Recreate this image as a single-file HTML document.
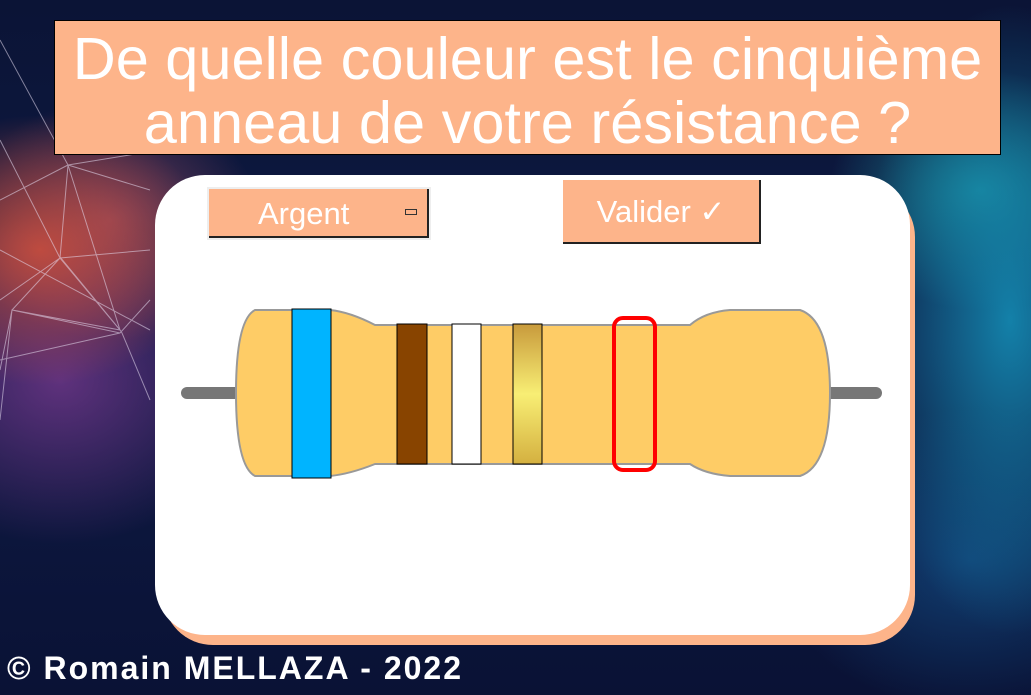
<!DOCTYPE html>
<html><head><meta charset="utf-8"><style>
html,body{margin:0;padding:0}
body{width:1031px;height:695px;overflow:hidden;position:relative;font-family:"Liberation Sans",sans-serif;
background:
radial-gradient(ellipse 230px 180px at 40px 250px, rgba(210,80,60,0.85), transparent 75%),
radial-gradient(ellipse 200px 160px at 110px 220px, rgba(190,90,110,0.6), transparent 75%),
radial-gradient(ellipse 260px 220px at 60px 380px, rgba(130,60,150,0.7), transparent 75%),
radial-gradient(ellipse 200px 420px at 1010px 320px, rgba(20,140,180,0.9), transparent 75%),
radial-gradient(ellipse 200px 160px at 980px 190px, rgba(30,170,180,0.7), transparent 75%),
radial-gradient(ellipse 260px 200px at 970px 560px, rgba(20,90,150,0.6), transparent 75%),
linear-gradient(180deg,#0b1436 0%,#0e1a44 50%,#0a1235 100%);}
.title{position:absolute;left:54px;top:20px;width:947px;height:135px;background:#FDB48A;border:1px solid #000;color:#fff;text-align:center;font-size:59.5px;line-height:64px;padding-top:6px;box-sizing:border-box;white-space:nowrap}
.shadow{position:absolute;left:163px;top:187px;width:752px;height:458px;background:#FDB48A;border-radius:50px}
.panel{position:absolute;left:155px;top:175px;width:755px;height:460px;background:#fff;border-radius:50px}
.dd{position:absolute;left:209px;top:189px;width:220px;height:49px;background:#FDB48A;border-right:2px solid #222;border-bottom:2px solid #222;box-sizing:border-box;color:#fff;font-size:31px;line-height:50px;outline:2px solid #eee}
.dd span{position:absolute;left:49px}
.dd i{position:absolute;left:196px;top:20px;width:10px;height:4px;background:#FDB48A;border:1px solid #333}
.val{position:absolute;left:563px;top:180px;width:198px;height:64px;background:#FDB48A;border-right:2px solid #222;border-bottom:2px solid #222;box-sizing:border-box;color:#fff;font-size:31px;line-height:64px;text-align:center}
.foot{position:absolute;left:7px;top:650px;color:#fff;font-weight:bold;font-size:32px;font-family:"Liberation Sans",sans-serif;letter-spacing:2px}
</style></head><body>
<svg style="position:absolute;left:0;top:0" width="200" height="695" stroke="rgba(230,220,240,0.55)" stroke-width="1" fill="none">
<path d="M0 40 L68 165 L60 258 L12 310 M68 165 L0 200 M68 165 L160 150 M68 165 L120 330 L60 258 M60 258 L0 300 M60 258 L150 250 M120 330 L12 310 L0 370 M120 330 L60 257 M12 310 L120 333 L150 300 M120 330 L122 333 L150 400 M0 250 L150 330 M12 310 L0 420 M120 333 L0 360 M0 140 L60 258 M150 190 L68 165"/>
</svg>
<div class="title">De quelle couleur est le cinquième<br>anneau de votre résistance ?</div>
<div class="shadow"></div>
<div class="panel"></div>
<div class="dd"><span>Argent</span><i></i></div>
<div class="val">Valider ✓</div>
<svg style="position:absolute;left:0;top:0" width="1031" height="695">
<defs><linearGradient id="g" x1="0" y1="0" x2="0" y2="1"><stop offset="0" stop-color="#c89a3c"/><stop offset="0.5" stop-color="#f8ee74"/><stop offset="1" stop-color="#d4b040"/></linearGradient></defs>
<line x1="187" y1="393" x2="876" y2="393" stroke="#777" stroke-width="12" stroke-linecap="round"/>
<path d="M255 310 L330 310 Q350 312 375 325 L690 325 Q705 312 730 310 L800 310 Q830 320 830 393 Q830 466 800 476 L730 476 Q705 474 690 464 L375 464 Q350 474 330 476 L255 476 Q236 466 236 393 Q236 320 255 310 Z" fill="#FECC66" stroke="#999" stroke-width="2"/>
<rect x="292" y="309" width="39" height="169" fill="#00B4FF" stroke="#000" stroke-width="1"/>
<rect x="397" y="324" width="30" height="140" fill="#884400" stroke="#000" stroke-width="1"/>
<rect x="452" y="324" width="29" height="140" fill="#fff" stroke="#000" stroke-width="1"/>
<rect x="513" y="324" width="29" height="140" fill="url(#g)" stroke="#000" stroke-width="1"/>
<rect x="614" y="318" width="41" height="152" rx="9" fill="none" stroke="#f00" stroke-width="4"/>
</svg>
<div class="foot">© Romain MELLAZA - 2022</div>
</body></html>
